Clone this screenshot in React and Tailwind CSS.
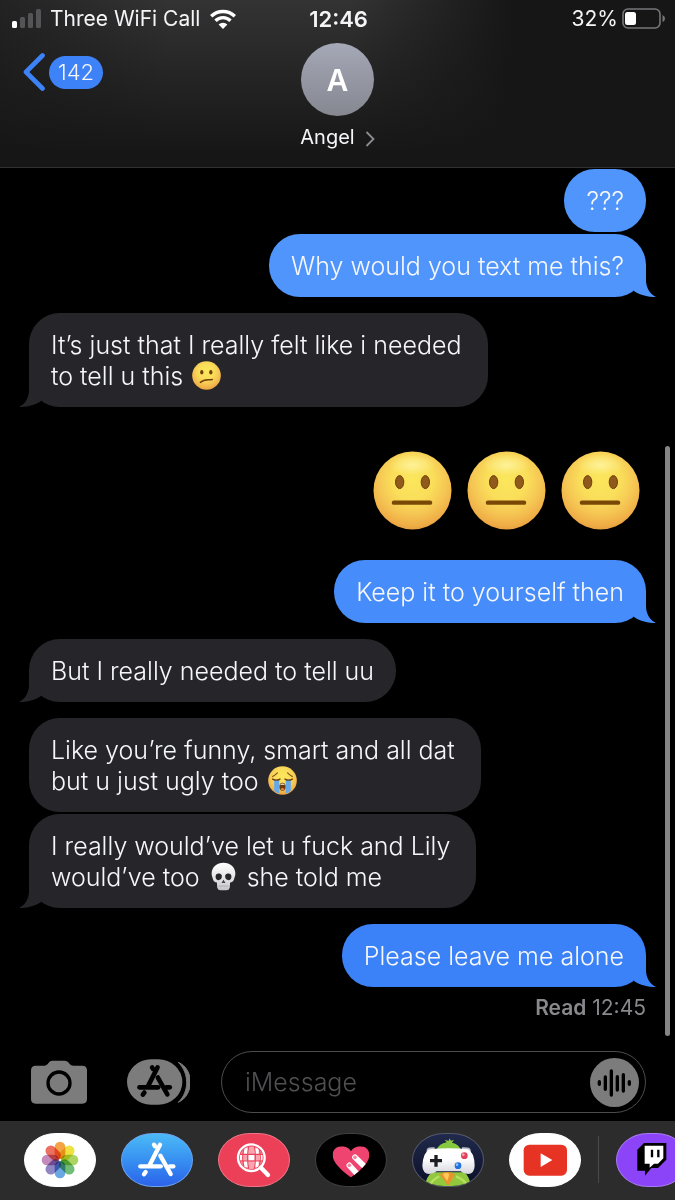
import React, { useState } from 'react';
import clsx from 'clsx';

const messages = [
  { id: 1, from: 'me', lines: ['???'], tone: 'light', spacing: 'mt-px' },
  { id: 2, from: 'me', lines: ['Why would you text me this?'], tone: 'light', tail: true, spacing: 'mt-[2px]' },
  { id: 3, from: 'them', lines: ['It’s just that I really felt like i needed', 'to tell u this :confused:'], tail: true, spacing: 'mt-4' },
  { id: 4, from: 'me', stickers: 3, spacing: 'mt-11 mb-[14px]' },
  { id: 5, from: 'me', lines: ['Keep it to yourself then'], tone: 'medium', tail: true, spacing: 'mt-4' },
  { id: 6, from: 'them', lines: ['But I really needed to tell uu'], tail: true, spacing: 'mt-4' },
  { id: 7, from: 'them', lines: ['Like you’re funny, smart and all dat', 'but u just ugly too :sob:'], spacing: 'mt-4' },
  { id: 8, from: 'them', lines: ['I really would’ve let u fuck and Lily', 'would’ve too :skull: she told me'], tail: true, spacing: 'mt-[2px]' },
  { id: 9, from: 'me', lines: ['Please leave me alone'], tone: 'deep', tail: true, spacing: 'mt-4' },
];

const tones = {
  light: 'bg-[#5095fb] text-[#5095fb]',
  medium: 'bg-[#468cfa] text-[#468cfa]',
  deep: 'bg-[#3b82f8] text-[#3b82f8]',
  grey: 'bg-[#262529] text-[#262529]',
};

const FaceBase = () => <circle cx="40" cy="40" r="39.5" fill="url(#face)" />;

const NeutralFace = ({ className }) => (
  <svg viewBox="0 0 80 80" className={className} role="img" aria-label="neutral face">
    <FaceBase />
    <ellipse cx="40" cy="14" rx="24" ry="11" fill="url(#shine)" />
    <g fill="#8f5a1c" stroke="#704008" strokeWidth="1">
      <ellipse cx="27" cy="31.500" rx="4.2" ry="6.6" />
      <ellipse cx="53" cy="31.500" rx="4.2" ry="6.6" />
    </g>
    <rect x="19" y="50" width="41" height="4.500" rx="2.200" fill="#7a4806" />
  </svg>
);

const ConfusedFace = ({ className }) => (
  <svg viewBox="0 0 80 80" className={className} role="img" aria-label="confused face">
    <FaceBase />
    <ellipse cx="27" cy="31" rx="4.500" ry="6.500" fill="#704008" />
    <ellipse cx="52" cy="31" rx="4.500" ry="6.500" fill="#704008" />
    <path d="M23 59 C33 50 42 53 56 51" fill="none" stroke="#704008" strokeWidth="4" strokeLinecap="round" />
  </svg>
);

const SobFace = ({ className }) => (
  <svg viewBox="0 0 80 80" className={className} role="img" aria-label="loudly crying face">
    <FaceBase />
    <path d="M13 29 Q20 25 26 19 M67 29 Q60 25 54 19" fill="none" stroke="#8a5516" strokeWidth="3.500" strokeLinecap="round" />
    <path d="M17 37 H31 V76 Q23 73 17 68 Z M49 37 H63 V68 Q57 73 49 76 Z" fill="#66a9e8" />
    <path d="M13 36 Q23 42 33 36 M47 36 Q57 42 67 36" fill="none" stroke="#704008" strokeWidth="4" strokeLinecap="round" />
    <ellipse cx="40" cy="57" rx="8.500" ry="11" fill="#6d3d05" />
    <path d="M33 52 Q40 45 47 52 Z" fill="#fff" />
    <path d="M34 64 Q40 58 46 64 Q40 70 34 64" fill="#d8854a" />
  </svg>
);

const Skull = ({ className }) => (
  <svg viewBox="0 0 80 88" className={className} role="img" aria-label="skull">
    <path
      d="M40 2 C60 2 76 15 76 35 C76 43 73 47 72 52 C71 58 66 61 60 62 L59 78 Q57 86 49 86 H31 Q23 86 21 78 L20 62 C14 61 9 58 8 52 C7 47 4 43 4 35 C4 15 20 2 40 2 Z"
      fill="url(#bone)"
    />
    <path d="M16 42 Q18 33 28 35 Q36 37 35 45 Q34 55 24 55 Q15 54 16 42 Z M64 42 Q62 33 52 35 Q44 37 45 45 Q46 55 56 55 Q65 54 64 42 Z" fill="#27262a" />
    <path d="M40 54 L34 64 H39 L40 62 L41 64 H46 Z" fill="#3b3a3e" />
    <path d="M26 73 H54" stroke="#9b9a9f" strokeWidth="2" />
  </svg>
);

const emojis = {
  ':confused:': ConfusedFace,
  ':sob:': SobFace,
  ':skull:': Skull,
};

// Gradients shared by every emoji on the page
const EmojiGradients = () => (
  <svg className="absolute size-0" aria-hidden="true">
    <defs>
      <radialGradient id="face" cx="0.5" cy="0.36" r="0.66">
        <stop offset="0" stopColor="#fbe75c" />
        <stop offset="0.4" stopColor="#fade5a" />
        <stop offset="0.68" stopColor="#f5c553" />
        <stop offset="0.9" stopColor="#efac45" />
        <stop offset="1" stopColor="#e49b41" />
      </radialGradient>
      <radialGradient id="shine">
        <stop offset="0" stopColor="#fff6a8" stopOpacity="0.8" />
        <stop offset="1" stopColor="#fff6a8" stopOpacity="0" />
      </radialGradient>
      <linearGradient id="bone" x1="0" y1="0" x2="0" y2="1">
        <stop offset="0" stopColor="#ffffff" />
        <stop offset="0.6" stopColor="#e2e2e4" />
        <stop offset="1" stopColor="#c4c4c8" />
      </linearGradient>
    </defs>
  </svg>
);

const MessageLine = ({ text }) => (
  <span className="block">
    {text.split(/(:\w+:)/).map((part, index) => {
      const Emoji = emojis[part];
      return Emoji ? <Emoji key={index} className="mx-[2px] inline-block size-[29px] align-[-5px]" /> : part;
    })}
  </span>
);

const Tail = ({ side }) => (
  <svg
    viewBox="0 0 24 32"
    className={clsx('absolute bottom-0 h-8 w-6', side === 'me' ? '-right-[10px]' : '-left-[10px] -scale-x-100')}
    aria-hidden="true"
  >
    <path d="M14 0 V15 C14 23 18 29 24 32 C16 32 8 30 2 26 L0 16 Z" fill="currentColor" />
  </svg>
);

const Message = ({ message }) => {
  const mine = message.from === 'me';

  if (message.stickers) {
    return (
      <li className={clsx('flex gap-[15px] self-end pr-[6px]', message.spacing)}>
        {[...Array(message.stickers)].map((_, index) => (
          <NeutralFace key={index} className="size-[79px]" />
        ))}
      </li>
    );
  }

  return (
    <li
      className={clsx(
        'relative rounded-[31px] pt-[17px] pb-[15px] pl-[22px]',
        message.lines.length > 1 ? 'pr-[26px]' : 'pr-[22px]',
        mine ? 'self-end' : 'self-start',
        mine ? tones[message.tone] : tones.grey,
        message.spacing
      )}
    >
      {message.tail && <Tail side={message.from} />}
      <p className="relative text-[25px] leading-[31px] font-[350] text-[#f6f7fa]">
        {message.lines.map((line) => (
          <MessageLine key={line} text={line} />
        ))}
      </p>
    </li>
  );
};

const StatusBar = () => (
  <div className="grid h-[37px] grid-cols-[1fr_auto_1fr] items-center pr-[10px] pl-3 text-[21px] leading-[26px]">
    <div className="flex items-center gap-2">
      <svg viewBox="0 0 30 20" className="h-5 w-[30px]" aria-hidden="true">
        <rect x="0" y="12" width="5" height="7" rx="1.500" fill="#fff" />
        <rect x="8" y="8" width="5" height="11" rx="1.500" fill="#545456" />
        <rect x="16" y="4" width="5" height="15" rx="1.500" fill="#545456" />
        <rect x="24" y="0" width="5" height="19" rx="1.500" fill="#545456" />
      </svg>
      <span>Three WiFi Call</span>
      <svg viewBox="0 0 26 20" className="ml-[2px] h-5 w-[26px]" aria-label="Wi-Fi">
        <g fill="none" stroke="#fff" strokeWidth="3.400">
          <path d="M1.200 7.200 A17 17 0 0 1 24.800 7.200" />
          <path d="M5.500 11.700 A10.800 10.800 0 0 1 20.500 11.700" />
        </g>
        <path d="M13 20 L8.600 15.500 A6.500 6.500 0 0 1 17.400 15.500 Z" fill="#fff" />
      </svg>
    </div>
    <time className="text-[22px] font-semibold">12:46</time>
    <div className="flex items-center justify-end gap-1">
      <span>32%</span>
      <svg viewBox="0 0 43 21" className="h-[21px] w-[43px]" aria-label="Battery">
        <rect x="1" y="1" width="37" height="19" rx="5" fill="none" stroke="#77777a" strokeWidth="1.600" />
        <rect x="3" y="4" width="11" height="13" rx="2.500" fill="#fff" />
        <path d="M40.500 7 Q43 8 43 10.500 Q43 13 40.500 14 Z" fill="#77777a" />
      </svg>
    </div>
  </div>
);

const Header = () => (
  <header className="border-b border-[#303031] bg-[linear-gradient(to_bottom,transparent,#161617_92%),linear-gradient(to_right,#232324,#333334_25%,#333334_52%,#161617_76%)] text-[#f5f5f7]">
    <StatusBar />
    <div className="grid h-[130px] grid-cols-[1fr_auto_1fr] items-start pt-[6px]">
      <button type="button" aria-label="Back, 142 unread" className="mt-[10px] ml-[23px] flex items-center gap-1 justify-self-start">
        <svg viewBox="0 0 22 38" className="h-[38px] w-[22px]" aria-hidden="true">
          <path d="M19.500 2.500 L3 19 L19.500 35.500" fill="none" stroke="#3d83f7" strokeWidth="4.600" strokeLinecap="round" strokeLinejoin="round" />
        </svg>
        <span className="rounded-full bg-[#3d83f7] px-[9px] py-1 text-[22px] leading-[25px] font-[350]">142</span>
      </button>
      <button type="button" className="flex flex-col items-center">
        <span className="flex size-[73px] items-center justify-center rounded-full bg-linear-to-b from-[#a5a8b6] to-[#858890] pt-[2px] text-[30px] font-semibold text-white">
          A
        </span>
        <span className="mt-2 flex items-center gap-[10px] text-[20px] leading-[26px]">
          Angel
          <svg viewBox="0 0 10 16" className="mt-1 h-4 w-[10px]" aria-hidden="true">
            <path d="M1.500 1 L8.500 8 L1.500 15" fill="none" stroke="#8d8d91" strokeWidth="1.800" />
          </svg>
        </span>
      </button>
    </div>
  </header>
);

const AppStoreMark = ({ weight = 13 }) => (
  <g fill="none" stroke="currentColor" strokeWidth={weight} strokeLinecap="round">
    <path d="M117 35 L86 96" />
    <path d="M74 117 L69 124" />
    <path d="M58 100 H119" />
    <path d="M146 100 H157" />
    <path d="M99 35 L102 40" />
    <path d="M118 68 L149 123" />
  </g>
);

const petals = ['#f39a32', '#ecdf2f', '#a3cf52', '#62b568', '#5b9de0', '#8379bd', '#bd7db4', '#e9604f'];

const PhotosIcon = () => (
  <g transform="translate(108 81)">
    {petals.map((color, index) => (
      <rect
        key={color}
        x="-16"
        y="-55"
        width="32"
        height="52"
        rx="16"
        fill={color}
        fillOpacity="0.9"
        transform={`rotate(${index * 45})`}
        className="mix-blend-multiply"
      />
    ))}
  </g>
);

const ImageSearchIcon = () => (
  <g>
    <clipPath id="globe">
      <circle cx="100" cy="74" r="34" />
    </clipPath>
    <g clipPath="url(#globe)">
      <rect x="66" y="40" width="68" height="68" fill="#f8a5b0" />
      <path d="M78 46 H91 V64 H78 Z M91 66 H109 V82 H91 Z M109 46 H122 V64 H109 Z M66 66 H76 V82 H66 Z M124 66 H134 V82 H124 Z M78 84 H91 V102 H78 Z M109 84 H122 V102 H109 Z" fill="#fff" />
      <path d="M64 64 H136 M64 84 H136 M92 38 Q86 74 92 110 M109 38 Q115 74 109 110 M80 38 Q68 74 80 110 M121 38 Q133 74 121 110" fill="none" stroke="#ec4059" strokeWidth="3.500" />
    </g>
    <circle cx="100" cy="74" r="40" fill="none" stroke="#fff" strokeWidth="7" />
    <path d="M129 104 L150 126" stroke="#fff" strokeWidth="13" strokeLinecap="round" />
  </g>
);

const HeartIcon = () => (
  <g>
    <clipPath id="heart">
      <path d="M108 133 C90 120 53 92 53 66 C53 49 66 40 80 40 C94 40 103 47 108 55 C113 47 122 40 136 40 C151 40 163 50 163 66 C163 92 126 120 108 133 Z" />
    </clipPath>
    <g clipPath="url(#heart)">
      <rect x="50" y="35" width="120" height="105" fill="#ef4370" />
      <path d="M103 97 L140 138 M120 73 L160 112" stroke="#fff" strokeWidth="17" strokeLinecap="round" />
      <path d="M116 92 L150 128" stroke="#ef4370" strokeWidth="3" />
      <circle cx="103" cy="97" r="5.500" fill="#f4879f" />
      <circle cx="120" cy="73" r="5.500" fill="#f4879f" />
    </g>
  </g>
);

const GamePigeonIcon = () => (
  <g>
    <path d="M38 162 Q42 132 60 118 H158 Q174 134 177 162 Z" fill="#91c83e" />
    <path d="M50 162 Q60 140 82 130 M168 162 Q158 140 132 130" fill="none" stroke="#b7df61" strokeWidth="7" />
    <path d="M72 52 Q82 31 104 28 L98 20 L110 24 L112 16 L117 23 L126 20 L120 29 Q142 34 147 52 Z" fill="#86c940" />
    <path d="M44 50 Q46 41 68 43 V56 H44 Z M176 50 Q174 41 150 43 V56 H176 Z" fill="#b9bdc8" />
    <path d="M52 49 Q110 43 168 49 Q187 58 188 98 Q187 122 168 123 Q154 123 146 115 H74 Q66 123 52 123 Q32 122 31 98 Q34 58 52 49 Z" fill="url(#pad)" />
    <path d="M72 66 V101 M54 83 H90" stroke="#1c1d20" strokeWidth="10" />
    <circle cx="157" cy="68" r="10" fill="#e2415c" />
    <circle cx="154" cy="65" r="4" fill="#f9a7b2" />
    <circle cx="138" cy="98" r="10" fill="#2272dd" />
    <circle cx="135" cy="95" r="4" fill="#8fc4ff" />
    <path d="M83 124 Q106 110 129 124 Q120 142 108 158 Q96 142 83 124 Z" fill="#e8942a" />
    <path d="M92 123 Q106 117 112 124 Q110 134 105 144 Z" fill="#ffc95a" />
    <defs>
      <linearGradient id="pad" x1="0" y1="0" x2="0" y2="1">
        <stop offset="0.4" stopColor="#ffffff" />
        <stop offset="1" stopColor="#d5d6de" />
      </linearGradient>
    </defs>
  </g>
);

const YouTubeIcon = () => (
  <g>
    <rect x="44" y="35" width="130" height="93" rx="17" fill="#e63323" />
    <path d="M95 61 L130 81 L95 102 Z" fill="#fff" />
  </g>
);

const TwitchIcon = () => (
  <g>
    <path d="M64 50 L84 30 H151 V80 L126 105 H106 L87 128 V113 H64 Z" fill="#000" />
    <path d="M86 38 H142 V76 L126 92 H114 L101 104 V92 H86 Z" fill="#fff" />
    <path d="M108 50 V73 M127 50 V73" stroke="#000" strokeWidth="7" />
  </g>
);

const apps = [
  { name: 'Photos', Icon: PhotosIcon, style: 'bg-white border-white' },
  { name: 'App Store', Icon: AppStoreMark, style: 'bg-linear-to-b from-[#4cbaf6] to-[#2d62ea] border-[#6ea4ef] text-white' },
  { name: '#images', Icon: ImageSearchIcon, style: 'bg-[#ec4059] border-[#ee7486]' },
  { name: 'Digital Touch', Icon: HeartIcon, style: 'bg-black border-[#404042]' },
  { name: 'GamePigeon', Icon: GamePigeonIcon, style: 'bg-linear-to-b from-[#202a4c] to-[#0c1028] border-[#56596a]' },
  { name: 'YouTube', Icon: YouTubeIcon, style: 'bg-white border-white' },
];

const AppButton = ({ name, Icon, style }) => (
  <button
    type="button"
    aria-label={name}
    className={clsx('h-[54px] w-[72px] shrink-0 overflow-hidden rounded-[32px/27px] border', style)}
  >
    <svg viewBox="3 3 210 156" className="size-full" aria-hidden="true">
      <Icon />
    </svg>
  </button>
);

const Composer = () => {
  const [draft, setDraft] = useState('');

  return (
    <form className="flex items-center pr-[29px] pb-2 pl-[31px]" onSubmit={(e) => e.preventDefault()}>
      <button type="button" aria-label="Camera">
        <svg viewBox="0 0 168 132" className="h-11 w-14" aria-hidden="true">
          <path d="M14 17 H40 Q46 17 50 12 L55 6 Q59 2 65 2 H101 Q108 2 112 7 L116 12 Q120 17 127 17 H154 Q168 17 168 31 V117 Q168 131 154 131 H14 Q0 131 0 117 V31 Q0 17 14 17 Z" fill="#7c7c7c" />
          <circle cx="84" cy="69" r="33" fill="none" stroke="#000" strokeWidth="10" />
        </svg>
      </button>
      <button type="button" aria-label="Apps" className="ml-10">
        <svg viewBox="0 0 189 138" className="h-[46px] w-[63px]" aria-hidden="true">
          <rect x="0" y="1" width="166" height="136" rx="72" ry="68" fill="#7c7c7c" />
          <path d="M154 10 C202 30 202 108 154 130 C187 98 188 44 154 10 Z" fill="#7c7c7c" stroke="#7c7c7c" strokeWidth="3" strokeLinejoin="round" />
          <g transform="translate(-16 -7) scale(0.92)" className="text-black">
            <AppStoreMark weight={15} />
          </g>
        </svg>
      </button>
      <div className="ml-[31px] flex h-[62px] min-w-0 flex-1 items-center rounded-full border border-[#4c4c4f] pr-[6px] pl-[23px]">
        <input
          type="text"
          aria-label="Message"
          value={draft}
          onChange={(e) => setDraft(e.target.value)}
          placeholder="iMessage"
          className="min-w-0 flex-1 bg-transparent text-[25px] leading-[31px] font-[350] text-white outline-none placeholder:text-[#505053]"
        />
        <button type="button" aria-label="Record audio" className="size-[49px] shrink-0 rounded-full bg-[#7c7c7c]">
          <svg viewBox="0 0 147 147" className="size-full" aria-hidden="true">
            <path d="M28 71 V79 M46 57 V94 M64 39 V111 M82 56 V96 M100 50 V99 M118 71 V79" stroke="#000" strokeWidth="10" strokeLinecap="round" />
          </svg>
        </button>
      </div>
    </form>
  );
};

const App = () => (
  <div className="flex min-h-screen flex-col overflow-hidden bg-black font-[Inter,sans-serif]">
    <EmojiGradients />
    <Header />
    <main className="relative flex-1">
      <ol className="flex flex-col px-[29px]">
        {messages.map((message) => (
          <Message key={message.id} message={message} />
        ))}
      </ol>
      <p className="mt-2 pr-[29px] text-right text-[21px] leading-[26px] text-[#88888d]">
        <span className="font-semibold">Read</span> 12:45
      </p>
      <div className="absolute top-[278px] right-[5px] bottom-[15px] w-[5px] rounded-full bg-[#858585]" />
    </main>
    <footer>
      <Composer />
      <nav aria-label="iMessage apps" className="flex h-[79px] items-center overflow-hidden bg-[#2c2c2c] pb-[2px] pl-6">
        <div className="flex shrink-0 gap-[25px]">
          {apps.map((app) => (
            <AppButton key={app.name} {...app} />
          ))}
        </div>
        <div className="mx-[17px] h-[47px] w-px shrink-0 bg-[#4a4a4b]" />
        <AppButton name="Twitch" Icon={TwitchIcon} style="bg-[#8b44f7] border-[#a97af3]" />
      </nav>
    </footer>
  </div>
);

export default App;
